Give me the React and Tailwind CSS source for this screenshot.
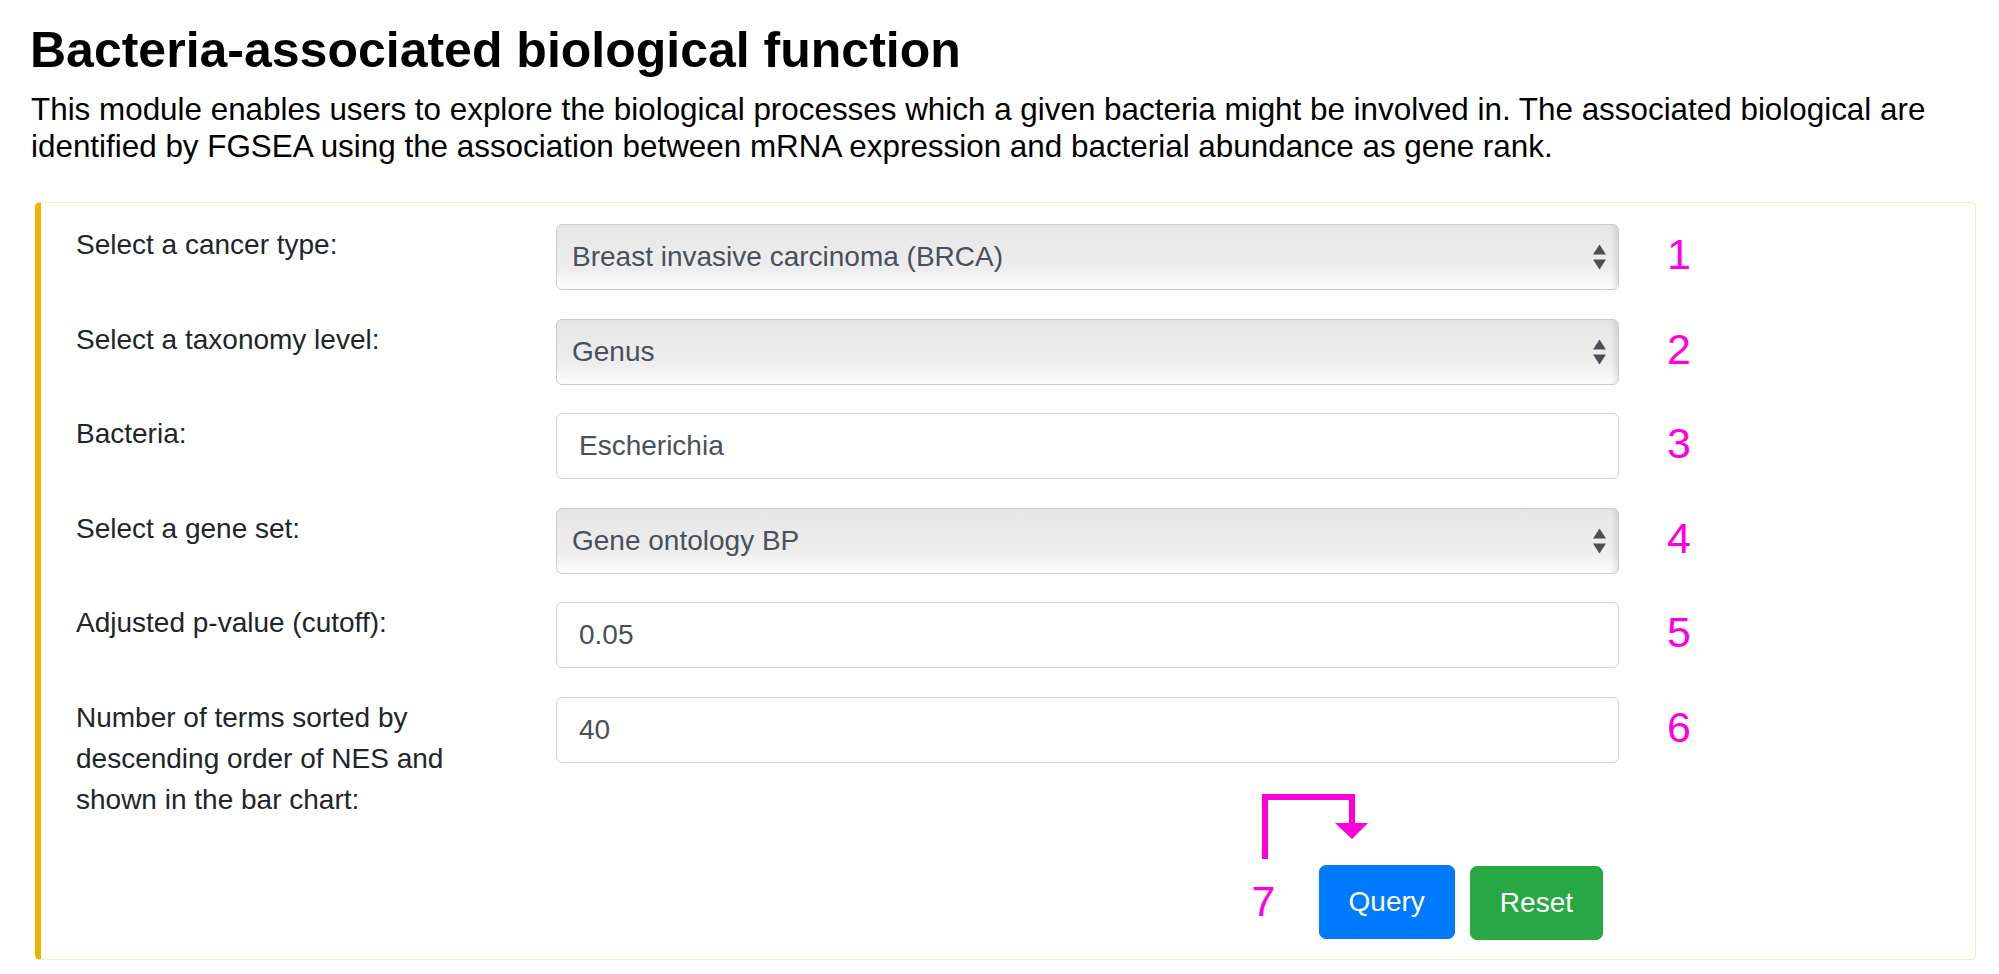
import React from "react";

const FIELDS = [
  { label: "Select a cancer type:", kind: "select", value: "Breast invasive carcinoma (BRCA)" },
  { label: "Select a taxonomy level:", kind: "select", value: "Genus" },
  { label: "Bacteria:", kind: "input", value: "Escherichia" },
  { label: "Select a gene set:", kind: "select", value: "Gene ontology BP" },
  { label: "Adjusted p-value (cutoff):", kind: "input", value: "0.05" },
  {
    label: "Number of terms sorted by descending order of NES and shown in the bar chart:",
    kind: "input",
    value: "40",
  },
];

const SelectArrows = () => (
  <svg
    width="13"
    height="25"
    viewBox="0 0 13 25"
    className="pointer-events-none absolute right-[13px] top-1/2 -translate-y-1/2"
    aria-hidden="true"
  >
    <polygon points="6.5,0 13,10 0,10" fill="#4a4f55" />
    <polygon points="0,15 13,15 6.5,25" fill="#4a4f55" />
  </svg>
);

const Control = ({ kind, value }) => {
  if (kind === "select") {
    return (
      <div className="relative w-full">
        <select
          defaultValue={value}
          className="h-[66px] w-full appearance-none rounded-[6px] border border-[#c9ced4] bg-linear-to-b from-[#e6e6e6] via-[#eeeeee] via-70% to-[#fefefe] pl-[15px] pr-[40px] text-[28px] text-[#495057] shadow-[inset_-6px_0_6px_-4px_rgba(0,0,0,0.12)] outline-none"
        >
          <option>{value}</option>
        </select>
        <SelectArrows />
      </div>
    );
  }
  return (
    <input
      type="text"
      defaultValue={value}
      className="h-[66px] w-full rounded-[6px] border border-[#ced4da] bg-white px-[22px] text-[28px] text-[#495057] outline-none"
    />
  );
};

const Marker = ({ n }) => (
  <div className="ml-[48px] w-[40px] text-[43px] leading-[60px] text-[#ff00dd]">{n}</div>
);

export default function App() {
  return (
    <div className="min-h-screen bg-white pl-[30px] pt-[20px] font-['Liberation_Sans',Arial,sans-serif]">
      <h1 className="text-[50px] font-bold leading-[60px] text-black">
        Bacteria-associated biological function
      </h1>
      <p className="mt-[11px] pl-[1px] pr-[20px] text-[31.4px] leading-[37px] text-black">
        This module enables users to explore the biological processes which a given bacteria might
        be involved in. The associated biological are identified by FGSEA using the association
        between mRNA expression and bacterial abundance as gene rank.
      </p>

      <div className="ml-[5px] mt-[37px] w-[1941px] rounded-[5px] border border-l-[6px] border-[#fbe8c7] border-l-[#f0b400] pb-[19px] pl-[35px] pt-[21px]">
        <div className="flex flex-col">
          {FIELDS.map((f, i) => (
            <div
              key={f.label}
              className={`flex items-start ${i === FIELDS.length - 1 ? "mb-[45px]" : "mb-[28.6px]"}`}
            >
              <label className="w-[480px] shrink-0 pr-[50px] text-[28px] leading-[41px] text-[#212529]">
                {f.label}
              </label>
              <div className="w-[1063px] shrink-0">
                <Control kind={f.kind} value={f.value} />
              </div>
              <Marker n={i + 1} />
            </div>
          ))}

          <div className="flex">
            <div className="w-[480px] shrink-0" />
            <div className="flex w-[1063px] shrink-0 justify-end gap-[15px] pr-[16px]">
              <div className="relative">
                <svg
                  width="107"
                  height="46"
                  viewBox="0 0 107 46"
                  className="absolute left-[-57px] top-[-71px] overflow-visible"
                  aria-hidden="true"
                >
                  <rect x="0" y="0" width="6" height="65" fill="#ff00dd" />
                  <rect x="0" y="0" width="93" height="6" fill="#ff00dd" />
                  <rect x="87" y="0" width="6" height="30" fill="#ff00dd" />
                  <polygon points="73,29 106,29 90,45" fill="#ff00dd" />
                </svg>
                <span className="absolute left-[-67px] top-[15px] text-[43px] leading-[43px] text-[#ff00dd]">
                  7
                </span>
                <button className="rounded-[7px] border border-[#007bff] bg-[#007bff] px-[29px] py-[15px] text-[28px] leading-[42px] text-white">
                  Query
                </button>
              </div>
              <button className="mt-[1px] rounded-[7px] border border-[#28a745] bg-[#28a745] px-[29px] py-[15px] text-[28px] leading-[42px] text-white">
                Reset
              </button>
            </div>
          </div>
        </div>
      </div>
    </div>
  );
}
